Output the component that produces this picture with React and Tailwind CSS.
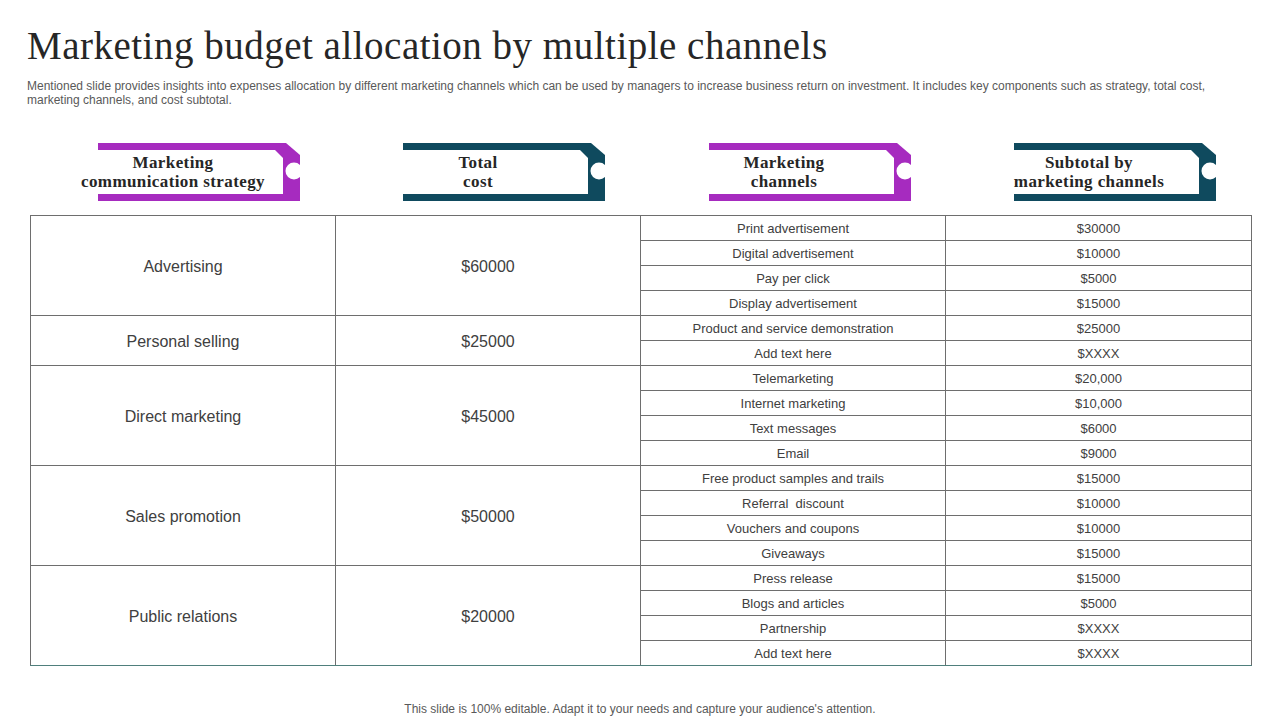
import React from 'react'

const groups = [
  {
    name: 'Advertising',
    total: '$60000',
    items: [
      ['Print advertisement', '$30000'],
      ['Digital advertisement', '$10000'],
      ['Pay per click', '$5000'],
      ['Display advertisement', '$15000'],
    ],
  },
  {
    name: 'Personal selling',
    total: '$25000',
    items: [
      ['Product and service demonstration', '$25000'],
      ['Add text here', '$XXXX'],
    ],
  },
  {
    name: 'Direct marketing',
    total: '$45000',
    items: [
      ['Telemarketing', '$20,000'],
      ['Internet marketing', '$10,000'],
      ['Text messages', '$6000'],
      ['Email', '$9000'],
    ],
  },
  {
    name: 'Sales promotion',
    total: '$50000',
    items: [
      ['Free product samples and trails', '$15000'],
      ['Referral  discount', '$10000'],
      ['Vouchers and coupons', '$10000'],
      ['Giveaways', '$15000'],
    ],
  },
  {
    name: 'Public relations',
    total: '$20000',
    items: [
      ['Press release', '$15000'],
      ['Blogs and articles', '$5000'],
      ['Partnership', '$XXXX'],
      ['Add text here', '$XXXX'],
    ],
  },
]

const tabs = [
  ['Marketing', 'communication strategy', '#a62bbf'],
  ['Total', 'cost', '#0f4a5e'],
  ['Marketing', 'channels', '#a62bbf'],
  ['Subtotal by', 'marketing channels', '#0f4a5e'],
]

function Tab({ line1, line2, color }) {
  return (
    <div className="relative w-[202px] h-[58px]">
      <svg width="202" height="58" viewBox="0 0 202 58" className="absolute inset-0">
        <path d="M0 0 H188 L202 12 V58 H0 Z" fill={color} />
        <path d="M0 7 H177 L185 15 V51 H0 Z" fill="#fff" />
        <circle cx="196" cy="28" r="8.5" fill="#fff" />
      </svg>
      <div className="absolute left-0 top-0 w-[150px] h-[58px] flex flex-col items-center justify-center font-['Liberation_Serif',serif] font-bold text-[17px] leading-[19px] tracking-[0.4px] text-[#262626] whitespace-nowrap">
        <span>{line1}</span>
        <span>{line2}</span>
      </div>
    </div>
  )
}

export default function App() {
  const last = groups.length - 1
  return (
    <div className="w-[1280px] h-[720px] bg-white overflow-hidden font-['Liberation_Sans',Arial,sans-serif]">
      <h1 className="pl-[27px] pt-[26px] text-[39px] leading-[39px] tracking-[0.5px] font-['Liberation_Serif',serif] text-[#262626] whitespace-nowrap">
        Marketing budget allocation by multiple channels
      </h1>
      <p className="mt-[14px] ml-[27px] w-[1190px] text-[12px] leading-[14px] text-[#595959]">
        Mentioned slide provides insights into expenses allocation by different marketing channels which can be used by managers to increase business return on investment. It includes key components such as strategy, total cost, marketing channels, and cost subtotal.
      </p>

      <div className="mt-[36px] ml-[30px] grid grid-cols-[305px_305px_305px_306px]">
        {tabs.map(([a, b, c], i) => (
          <div key={i} className={i < 2 ? 'pl-[68px]' : 'pl-[69px]'}>
            <Tab line1={a} line2={b} color={c} />
          </div>
        ))}
      </div>

      <table className="mt-[14px] ml-[30px] w-[1221px] table-fixed border-collapse text-[#404040]">
        <colgroup>
          <col className="w-[305px]" />
          <col className="w-[305px]" />
          <col className="w-[305px]" />
          <col className="w-[306px]" />
        </colgroup>
        <tbody>
          {groups.map((g, gi) =>
            g.items.map(([item, cost], ii) => {
              const bottom = gi === last && ii === g.items.length - 1 ? 'border-b-[#4f7f7c]' : ''
              return (
                <tr key={gi + '-' + ii} className="h-[25px]">
                  {ii === 0 && (
                    <>
                      <td
                        rowSpan={g.items.length}
                        className={`border border-[#6e6e6e] text-center text-[16px] pt-[2px] ${gi === last ? 'border-b-[#4f7f7c]' : ''}`}
                      >
                        {g.name}
                      </td>
                      <td
                        rowSpan={g.items.length}
                        className={`border border-[#6e6e6e] text-center text-[16px] pt-[2px] ${gi === last ? 'border-b-[#4f7f7c]' : ''}`}
                      >
                        {g.total}
                      </td>
                    </>
                  )}
                  <td className={`border border-[#6e6e6e] text-center text-[13px] pt-[2px] pb-0 whitespace-pre ${bottom}`}>{item}</td>
                  <td className={`border border-[#6e6e6e] text-center text-[13px] pt-[2px] pb-0 ${bottom}`}>{cost}</td>
                </tr>
              )
            })
          )}
        </tbody>
      </table>

      <p className="mt-[35px] text-center text-[12px] leading-[16px] text-[#595959]">
        This slide is 100% editable. Adapt it to your needs and capture your audience's attention.
      </p>
    </div>
  )
}
